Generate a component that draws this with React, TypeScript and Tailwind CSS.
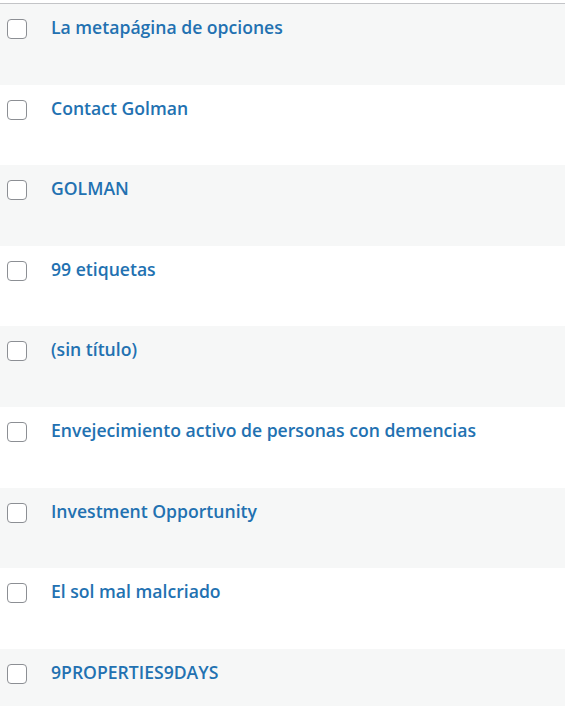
import React from 'react';

const posts = [
  'La metapágina de opciones',
  'Contact Golman',
  'GOLMAN',
  '99 etiquetas',
  '(sin título)',
  'Envejecimiento activo de personas con demencias',
  'Investment Opportunity',
  'El sol mal malcriado',
  '9PROPERTIES9DAYS',
];

const App: React.FC = () => {
  return (
    <div className="min-h-screen bg-white pt-[3px]" style={{ fontFamily: '"Open Sans", "Noto Sans", sans-serif' }}>
      <div className="border-t border-[#c3c4c7]">
        {posts.map((title, i) => (
          <div
            key={i}
            className={`flex items-start h-[80.6px] ${i % 2 === 0 ? 'bg-[#f6f7f7]' : 'bg-white'}`}
          >
            <div className="pl-[7px] pt-[15px] w-[51px] shrink-0">
              <span className="block w-5 h-5 rounded-[4px] border border-[#8c8f94] bg-white" />
            </div>
            <a href="#" className="pt-[11px] text-[17.6px] leading-6 font-semibold text-[#2271b1]">
              {title}
            </a>
          </div>
        ))}
      </div>
    </div>
  );
};

export default App;
